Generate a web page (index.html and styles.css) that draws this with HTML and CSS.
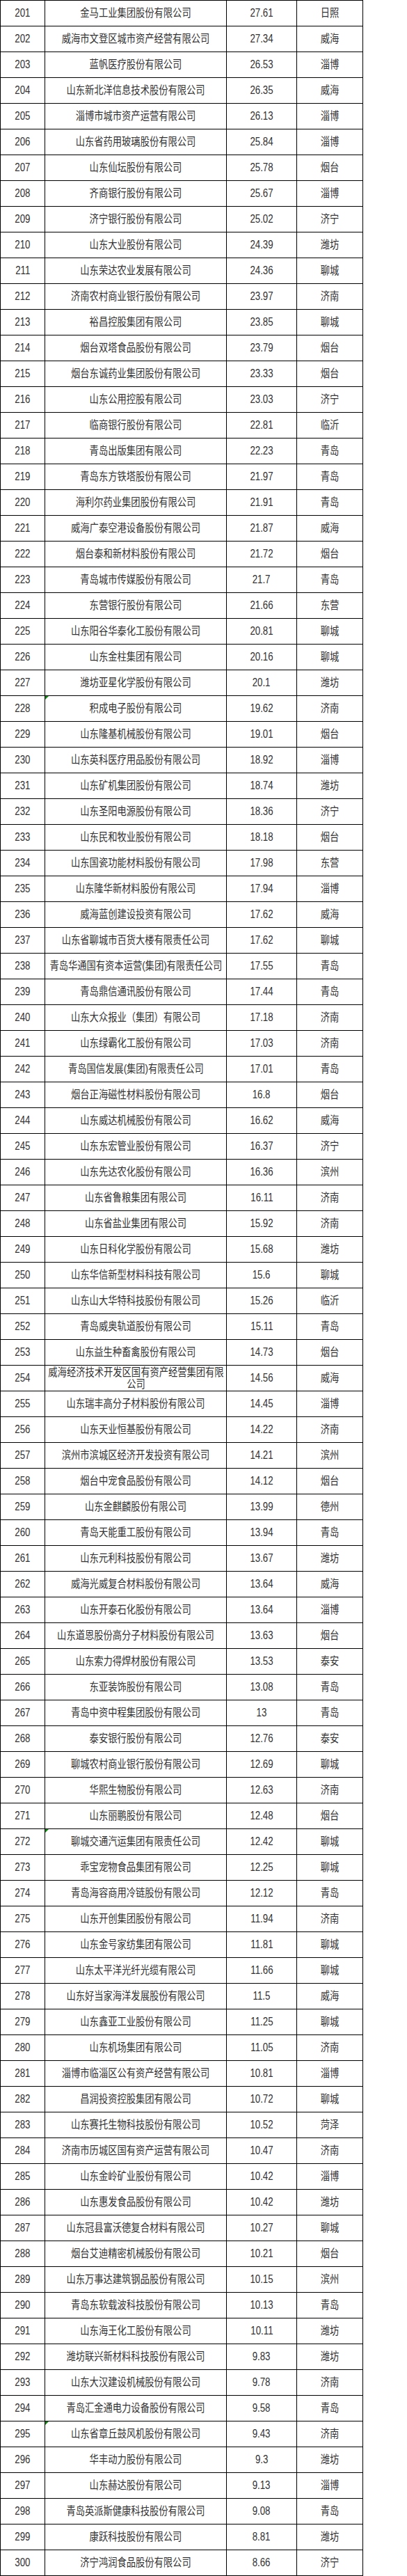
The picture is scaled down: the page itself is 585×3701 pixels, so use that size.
FILE: index.html
```html
<!DOCTYPE html>
<html lang="zh-CN">
<head>
<meta charset="utf-8">
<title>排名 201-300</title>
<link rel="stylesheet" href="styles.css">
</head>
<body>
<div class="sheet">
<div class="row"><div class="c"><span class="t">201</span></div><div class="c"><span class="t">金马工业集团股份有限公司</span></div><div class="c"><span class="t">27.61</span></div><div class="c"><span class="t">日照</span></div></div>
<div class="row"><div class="c"><span class="t">202</span></div><div class="c"><span class="t">威海市文登区城市资产经营有限公司</span></div><div class="c"><span class="t">27.34</span></div><div class="c"><span class="t">威海</span></div></div>
<div class="row"><div class="c"><span class="t">203</span></div><div class="c"><span class="t">蓝帆医疗股份有限公司</span></div><div class="c"><span class="t">26.53</span></div><div class="c"><span class="t">淄博</span></div></div>
<div class="row"><div class="c"><span class="t">204</span></div><div class="c"><span class="t">山东新北洋信息技术股份有限公司</span></div><div class="c"><span class="t">26.35</span></div><div class="c"><span class="t">威海</span></div></div>
<div class="row"><div class="c"><span class="t">205</span></div><div class="c"><span class="t">淄博市城市资产运营有限公司</span></div><div class="c"><span class="t">26.13</span></div><div class="c"><span class="t">淄博</span></div></div>
<div class="row"><div class="c"><span class="t">206</span></div><div class="c"><span class="t">山东省药用玻璃股份有限公司</span></div><div class="c"><span class="t">25.84</span></div><div class="c"><span class="t">淄博</span></div></div>
<div class="row"><div class="c"><span class="t">207</span></div><div class="c"><span class="t">山东仙坛股份有限公司</span></div><div class="c"><span class="t">25.78</span></div><div class="c"><span class="t">烟台</span></div></div>
<div class="row"><div class="c"><span class="t">208</span></div><div class="c"><span class="t">齐商银行股份有限公司</span></div><div class="c"><span class="t">25.67</span></div><div class="c"><span class="t">淄博</span></div></div>
<div class="row"><div class="c"><span class="t">209</span></div><div class="c"><span class="t">济宁银行股份有限公司</span></div><div class="c"><span class="t">25.02</span></div><div class="c"><span class="t">济宁</span></div></div>
<div class="row"><div class="c"><span class="t">210</span></div><div class="c"><span class="t">山东大业股份有限公司</span></div><div class="c"><span class="t">24.39</span></div><div class="c"><span class="t">潍坊</span></div></div>
<div class="row"><div class="c"><span class="t">211</span></div><div class="c"><span class="t">山东荣达农业发展有限公司</span></div><div class="c"><span class="t">24.36</span></div><div class="c"><span class="t">聊城</span></div></div>
<div class="row"><div class="c"><span class="t">212</span></div><div class="c"><span class="t">济南农村商业银行股份有限公司</span></div><div class="c"><span class="t">23.97</span></div><div class="c"><span class="t">济南</span></div></div>
<div class="row"><div class="c"><span class="t">213</span></div><div class="c"><span class="t">裕昌控股集团有限公司</span></div><div class="c"><span class="t">23.85</span></div><div class="c"><span class="t">聊城</span></div></div>
<div class="row"><div class="c"><span class="t">214</span></div><div class="c"><span class="t">烟台双塔食品股份有限公司</span></div><div class="c"><span class="t">23.79</span></div><div class="c"><span class="t">烟台</span></div></div>
<div class="row"><div class="c"><span class="t">215</span></div><div class="c"><span class="t">烟台东诚药业集团股份有限公司</span></div><div class="c"><span class="t">23.33</span></div><div class="c"><span class="t">烟台</span></div></div>
<div class="row"><div class="c"><span class="t">216</span></div><div class="c"><span class="t">山东公用控股有限公司</span></div><div class="c"><span class="t">23.03</span></div><div class="c"><span class="t">济宁</span></div></div>
<div class="row"><div class="c"><span class="t">217</span></div><div class="c"><span class="t">临商银行股份有限公司</span></div><div class="c"><span class="t">22.81</span></div><div class="c"><span class="t">临沂</span></div></div>
<div class="row"><div class="c"><span class="t">218</span></div><div class="c"><span class="t">青岛出版集团有限公司</span></div><div class="c"><span class="t">22.23</span></div><div class="c"><span class="t">青岛</span></div></div>
<div class="row"><div class="c"><span class="t">219</span></div><div class="c"><span class="t">青岛东方铁塔股份有限公司</span></div><div class="c"><span class="t">21.97</span></div><div class="c"><span class="t">青岛</span></div></div>
<div class="row"><div class="c"><span class="t">220</span></div><div class="c"><span class="t">海利尔药业集团股份有限公司</span></div><div class="c"><span class="t">21.91</span></div><div class="c"><span class="t">青岛</span></div></div>
<div class="row"><div class="c"><span class="t">221</span></div><div class="c"><span class="t">威海广泰空港设备股份有限公司</span></div><div class="c"><span class="t">21.87</span></div><div class="c"><span class="t">威海</span></div></div>
<div class="row"><div class="c"><span class="t">222</span></div><div class="c"><span class="t">烟台泰和新材料股份有限公司</span></div><div class="c"><span class="t">21.72</span></div><div class="c"><span class="t">烟台</span></div></div>
<div class="row"><div class="c"><span class="t">223</span></div><div class="c"><span class="t">青岛城市传媒股份有限公司</span></div><div class="c"><span class="t">21.7</span></div><div class="c"><span class="t">青岛</span></div></div>
<div class="row"><div class="c"><span class="t">224</span></div><div class="c"><span class="t">东营银行股份有限公司</span></div><div class="c"><span class="t">21.66</span></div><div class="c"><span class="t">东营</span></div></div>
<div class="row"><div class="c"><span class="t">225</span></div><div class="c"><span class="t">山东阳谷华泰化工股份有限公司</span></div><div class="c"><span class="t">20.81</span></div><div class="c"><span class="t">聊城</span></div></div>
<div class="row"><div class="c"><span class="t">226</span></div><div class="c"><span class="t">山东金柱集团有限公司</span></div><div class="c"><span class="t">20.16</span></div><div class="c"><span class="t">聊城</span></div></div>
<div class="row"><div class="c"><span class="t">227</span></div><div class="c"><span class="t">潍坊亚星化学股份有限公司</span></div><div class="c"><span class="t">20.1</span></div><div class="c"><span class="t">潍坊</span></div></div>
<div class="row"><div class="c"><span class="t">228</span></div><div class="c flag"><span class="t">积成电子股份有限公司</span></div><div class="c"><span class="t">19.62</span></div><div class="c"><span class="t">济南</span></div></div>
<div class="row"><div class="c"><span class="t">229</span></div><div class="c"><span class="t">山东隆基机械股份有限公司</span></div><div class="c"><span class="t">19.01</span></div><div class="c"><span class="t">烟台</span></div></div>
<div class="row"><div class="c"><span class="t">230</span></div><div class="c"><span class="t">山东英科医疗用品股份有限公司</span></div><div class="c"><span class="t">18.92</span></div><div class="c"><span class="t">淄博</span></div></div>
<div class="row"><div class="c"><span class="t">231</span></div><div class="c"><span class="t">山东矿机集团股份有限公司</span></div><div class="c"><span class="t">18.74</span></div><div class="c"><span class="t">潍坊</span></div></div>
<div class="row"><div class="c"><span class="t">232</span></div><div class="c"><span class="t">山东圣阳电源股份有限公司</span></div><div class="c"><span class="t">18.36</span></div><div class="c"><span class="t">济宁</span></div></div>
<div class="row"><div class="c"><span class="t">233</span></div><div class="c"><span class="t">山东民和牧业股份有限公司</span></div><div class="c"><span class="t">18.18</span></div><div class="c"><span class="t">烟台</span></div></div>
<div class="row"><div class="c"><span class="t">234</span></div><div class="c"><span class="t">山东国瓷功能材料股份有限公司</span></div><div class="c"><span class="t">17.98</span></div><div class="c"><span class="t">东营</span></div></div>
<div class="row"><div class="c"><span class="t">235</span></div><div class="c"><span class="t">山东隆华新材料股份有限公司</span></div><div class="c"><span class="t">17.94</span></div><div class="c"><span class="t">淄博</span></div></div>
<div class="row"><div class="c"><span class="t">236</span></div><div class="c"><span class="t">威海蓝创建设投资有限公司</span></div><div class="c"><span class="t">17.62</span></div><div class="c"><span class="t">威海</span></div></div>
<div class="row"><div class="c"><span class="t">237</span></div><div class="c"><span class="t">山东省聊城市百货大楼有限责任公司</span></div><div class="c"><span class="t">17.62</span></div><div class="c"><span class="t">聊城</span></div></div>
<div class="row"><div class="c"><span class="t">238</span></div><div class="c"><span class="t">青岛华通国有资本运营(集团)有限责任公司</span></div><div class="c"><span class="t">17.55</span></div><div class="c"><span class="t">青岛</span></div></div>
<div class="row"><div class="c"><span class="t">239</span></div><div class="c"><span class="t">青岛鼎信通讯股份有限公司</span></div><div class="c"><span class="t">17.44</span></div><div class="c"><span class="t">青岛</span></div></div>
<div class="row"><div class="c"><span class="t">240</span></div><div class="c"><span class="t">山东大众报业（集团）有限公司</span></div><div class="c"><span class="t">17.18</span></div><div class="c"><span class="t">济南</span></div></div>
<div class="row"><div class="c"><span class="t">241</span></div><div class="c"><span class="t">山东绿霸化工股份有限公司</span></div><div class="c"><span class="t">17.03</span></div><div class="c"><span class="t">济南</span></div></div>
<div class="row"><div class="c"><span class="t">242</span></div><div class="c"><span class="t">青岛国信发展(集团)有限责任公司</span></div><div class="c"><span class="t">17.01</span></div><div class="c"><span class="t">青岛</span></div></div>
<div class="row"><div class="c"><span class="t">243</span></div><div class="c"><span class="t">烟台正海磁性材料股份有限公司</span></div><div class="c"><span class="t">16.8</span></div><div class="c"><span class="t">烟台</span></div></div>
<div class="row"><div class="c"><span class="t">244</span></div><div class="c"><span class="t">山东威达机械股份有限公司</span></div><div class="c"><span class="t">16.62</span></div><div class="c"><span class="t">威海</span></div></div>
<div class="row"><div class="c"><span class="t">245</span></div><div class="c"><span class="t">山东东宏管业股份有限公司</span></div><div class="c"><span class="t">16.37</span></div><div class="c"><span class="t">济宁</span></div></div>
<div class="row"><div class="c"><span class="t">246</span></div><div class="c"><span class="t">山东先达农化股份有限公司</span></div><div class="c"><span class="t">16.36</span></div><div class="c"><span class="t">滨州</span></div></div>
<div class="row"><div class="c"><span class="t">247</span></div><div class="c"><span class="t">山东省鲁粮集团有限公司</span></div><div class="c"><span class="t">16.11</span></div><div class="c"><span class="t">济南</span></div></div>
<div class="row"><div class="c"><span class="t">248</span></div><div class="c"><span class="t">山东省盐业集团有限公司</span></div><div class="c"><span class="t">15.92</span></div><div class="c"><span class="t">济南</span></div></div>
<div class="row"><div class="c"><span class="t">249</span></div><div class="c"><span class="t">山东日科化学股份有限公司</span></div><div class="c"><span class="t">15.68</span></div><div class="c"><span class="t">潍坊</span></div></div>
<div class="row"><div class="c"><span class="t">250</span></div><div class="c"><span class="t">山东华信新型材料科技有限公司</span></div><div class="c"><span class="t">15.6</span></div><div class="c"><span class="t">聊城</span></div></div>
<div class="row"><div class="c"><span class="t">251</span></div><div class="c"><span class="t">山东山大华特科技股份有限公司</span></div><div class="c"><span class="t">15.26</span></div><div class="c"><span class="t">临沂</span></div></div>
<div class="row"><div class="c"><span class="t">252</span></div><div class="c"><span class="t">青岛威奥轨道股份有限公司</span></div><div class="c"><span class="t">15.11</span></div><div class="c"><span class="t">青岛</span></div></div>
<div class="row"><div class="c"><span class="t">253</span></div><div class="c"><span class="t">山东益生种畜禽股份有限公司</span></div><div class="c"><span class="t">14.73</span></div><div class="c"><span class="t">烟台</span></div></div>
<div class="row"><div class="c"><span class="t">254</span></div><div class="c"><span class="t wrap">威海经济技术开发区国有资产经营集团有限公司</span></div><div class="c"><span class="t">14.56</span></div><div class="c"><span class="t">威海</span></div></div>
<div class="row"><div class="c"><span class="t">255</span></div><div class="c"><span class="t">山东瑞丰高分子材料股份有限公司</span></div><div class="c"><span class="t">14.45</span></div><div class="c"><span class="t">淄博</span></div></div>
<div class="row"><div class="c"><span class="t">256</span></div><div class="c"><span class="t">山东天业恒基股份有限公司</span></div><div class="c"><span class="t">14.22</span></div><div class="c"><span class="t">济南</span></div></div>
<div class="row"><div class="c"><span class="t">257</span></div><div class="c"><span class="t">滨州市滨城区经济开发投资有限公司</span></div><div class="c"><span class="t">14.21</span></div><div class="c"><span class="t">滨州</span></div></div>
<div class="row"><div class="c"><span class="t">258</span></div><div class="c"><span class="t">烟台中宠食品股份有限公司</span></div><div class="c"><span class="t">14.12</span></div><div class="c"><span class="t">烟台</span></div></div>
<div class="row"><div class="c"><span class="t">259</span></div><div class="c"><span class="t">山东金麒麟股份有限公司</span></div><div class="c"><span class="t">13.99</span></div><div class="c"><span class="t">德州</span></div></div>
<div class="row"><div class="c"><span class="t">260</span></div><div class="c"><span class="t">青岛天能重工股份有限公司</span></div><div class="c"><span class="t">13.94</span></div><div class="c"><span class="t">青岛</span></div></div>
<div class="row"><div class="c"><span class="t">261</span></div><div class="c"><span class="t">山东元利科技股份有限公司</span></div><div class="c"><span class="t">13.67</span></div><div class="c"><span class="t">潍坊</span></div></div>
<div class="row"><div class="c"><span class="t">262</span></div><div class="c"><span class="t">威海光威复合材料股份有限公司</span></div><div class="c"><span class="t">13.64</span></div><div class="c"><span class="t">威海</span></div></div>
<div class="row"><div class="c"><span class="t">263</span></div><div class="c"><span class="t">山东开泰石化股份有限公司</span></div><div class="c"><span class="t">13.64</span></div><div class="c"><span class="t">淄博</span></div></div>
<div class="row"><div class="c"><span class="t">264</span></div><div class="c"><span class="t">山东道恩股份高分子材料股份有限公司</span></div><div class="c"><span class="t">13.63</span></div><div class="c"><span class="t">烟台</span></div></div>
<div class="row"><div class="c"><span class="t">265</span></div><div class="c"><span class="t">山东索力得焊材股份有限公司</span></div><div class="c"><span class="t">13.53</span></div><div class="c"><span class="t">泰安</span></div></div>
<div class="row"><div class="c"><span class="t">266</span></div><div class="c"><span class="t">东亚装饰股份有限公司</span></div><div class="c"><span class="t">13.08</span></div><div class="c"><span class="t">青岛</span></div></div>
<div class="row"><div class="c"><span class="t">267</span></div><div class="c"><span class="t">青岛中资中程集团股份有限公司</span></div><div class="c"><span class="t">13</span></div><div class="c"><span class="t">青岛</span></div></div>
<div class="row"><div class="c"><span class="t">268</span></div><div class="c"><span class="t">泰安银行股份有限公司</span></div><div class="c"><span class="t">12.76</span></div><div class="c"><span class="t">泰安</span></div></div>
<div class="row"><div class="c"><span class="t">269</span></div><div class="c"><span class="t">聊城农村商业银行股份有限公司</span></div><div class="c"><span class="t">12.69</span></div><div class="c"><span class="t">聊城</span></div></div>
<div class="row"><div class="c"><span class="t">270</span></div><div class="c"><span class="t">华熙生物股份有限公司</span></div><div class="c"><span class="t">12.63</span></div><div class="c"><span class="t">济南</span></div></div>
<div class="row"><div class="c"><span class="t">271</span></div><div class="c"><span class="t">山东丽鹏股份有限公司</span></div><div class="c"><span class="t">12.48</span></div><div class="c"><span class="t">烟台</span></div></div>
<div class="row"><div class="c"><span class="t">272</span></div><div class="c flag"><span class="t">聊城交通汽运集团有限责任公司</span></div><div class="c"><span class="t">12.42</span></div><div class="c"><span class="t">聊城</span></div></div>
<div class="row"><div class="c"><span class="t">273</span></div><div class="c"><span class="t">乖宝宠物食品集团有限公司</span></div><div class="c"><span class="t">12.25</span></div><div class="c"><span class="t">聊城</span></div></div>
<div class="row"><div class="c"><span class="t">274</span></div><div class="c"><span class="t">青岛海容商用冷链股份有限公司</span></div><div class="c"><span class="t">12.12</span></div><div class="c"><span class="t">青岛</span></div></div>
<div class="row"><div class="c"><span class="t">275</span></div><div class="c"><span class="t">山东开创集团股份有限公司</span></div><div class="c"><span class="t">11.94</span></div><div class="c"><span class="t">济南</span></div></div>
<div class="row"><div class="c"><span class="t">276</span></div><div class="c"><span class="t">山东金号家纺集团有限公司</span></div><div class="c"><span class="t">11.81</span></div><div class="c"><span class="t">聊城</span></div></div>
<div class="row"><div class="c"><span class="t">277</span></div><div class="c"><span class="t">山东太平洋光纤光缆有限公司</span></div><div class="c"><span class="t">11.66</span></div><div class="c"><span class="t">聊城</span></div></div>
<div class="row"><div class="c"><span class="t">278</span></div><div class="c"><span class="t">山东好当家海洋发展股份有限公司</span></div><div class="c"><span class="t">11.5</span></div><div class="c"><span class="t">威海</span></div></div>
<div class="row"><div class="c"><span class="t">279</span></div><div class="c"><span class="t">山东鑫亚工业股份有限公司</span></div><div class="c"><span class="t">11.25</span></div><div class="c"><span class="t">聊城</span></div></div>
<div class="row"><div class="c"><span class="t">280</span></div><div class="c"><span class="t">山东机场集团有限公司</span></div><div class="c"><span class="t">11.05</span></div><div class="c"><span class="t">济南</span></div></div>
<div class="row"><div class="c"><span class="t">281</span></div><div class="c"><span class="t">淄博市临淄区公有资产经营有限公司</span></div><div class="c"><span class="t">10.81</span></div><div class="c"><span class="t">淄博</span></div></div>
<div class="row"><div class="c"><span class="t">282</span></div><div class="c"><span class="t">昌润投资控股集团有限公司</span></div><div class="c"><span class="t">10.72</span></div><div class="c"><span class="t">聊城</span></div></div>
<div class="row"><div class="c"><span class="t">283</span></div><div class="c"><span class="t">山东赛托生物科技股份有限公司</span></div><div class="c"><span class="t">10.52</span></div><div class="c"><span class="t">菏泽</span></div></div>
<div class="row"><div class="c"><span class="t">284</span></div><div class="c"><span class="t">济南市历城区国有资产运营有限公司</span></div><div class="c"><span class="t">10.47</span></div><div class="c"><span class="t">济南</span></div></div>
<div class="row"><div class="c"><span class="t">285</span></div><div class="c"><span class="t">山东金岭矿业股份有限公司</span></div><div class="c"><span class="t">10.42</span></div><div class="c"><span class="t">淄博</span></div></div>
<div class="row"><div class="c"><span class="t">286</span></div><div class="c"><span class="t">山东惠发食品股份有限公司</span></div><div class="c"><span class="t">10.42</span></div><div class="c"><span class="t">潍坊</span></div></div>
<div class="row"><div class="c"><span class="t">287</span></div><div class="c"><span class="t">山东冠县富沃德复合材料有限公司</span></div><div class="c"><span class="t">10.27</span></div><div class="c"><span class="t">聊城</span></div></div>
<div class="row"><div class="c"><span class="t">288</span></div><div class="c"><span class="t">烟台艾迪精密机械股份有限公司</span></div><div class="c"><span class="t">10.21</span></div><div class="c"><span class="t">烟台</span></div></div>
<div class="row"><div class="c"><span class="t">289</span></div><div class="c"><span class="t">山东万事达建筑钢品股份有限公司</span></div><div class="c"><span class="t">10.15</span></div><div class="c"><span class="t">滨州</span></div></div>
<div class="row"><div class="c"><span class="t">290</span></div><div class="c"><span class="t">青岛东软载波科技股份有限公司</span></div><div class="c"><span class="t">10.13</span></div><div class="c"><span class="t">青岛</span></div></div>
<div class="row"><div class="c"><span class="t">291</span></div><div class="c"><span class="t">山东海王化工股份有限公司</span></div><div class="c"><span class="t">10.11</span></div><div class="c"><span class="t">潍坊</span></div></div>
<div class="row"><div class="c"><span class="t">292</span></div><div class="c"><span class="t">潍坊联兴新材料科技股份有限公司</span></div><div class="c"><span class="t">9.83</span></div><div class="c"><span class="t">潍坊</span></div></div>
<div class="row"><div class="c"><span class="t">293</span></div><div class="c"><span class="t">山东大汉建设机械股份有限公司</span></div><div class="c"><span class="t">9.78</span></div><div class="c"><span class="t">济南</span></div></div>
<div class="row"><div class="c"><span class="t">294</span></div><div class="c"><span class="t">青岛汇金通电力设备股份有限公司</span></div><div class="c"><span class="t">9.58</span></div><div class="c"><span class="t">青岛</span></div></div>
<div class="row"><div class="c"><span class="t">295</span></div><div class="c flag"><span class="t">山东省章丘鼓风机股份有限公司</span></div><div class="c"><span class="t">9.43</span></div><div class="c"><span class="t">济南</span></div></div>
<div class="row"><div class="c"><span class="t">296</span></div><div class="c"><span class="t">华丰动力股份有限公司</span></div><div class="c"><span class="t">9.3</span></div><div class="c"><span class="t">潍坊</span></div></div>
<div class="row"><div class="c"><span class="t">297</span></div><div class="c"><span class="t">山东赫达股份有限公司</span></div><div class="c"><span class="t">9.13</span></div><div class="c"><span class="t">淄博</span></div></div>
<div class="row"><div class="c"><span class="t">298</span></div><div class="c"><span class="t">青岛英派斯健康科技股份有限公司</span></div><div class="c"><span class="t">9.08</span></div><div class="c"><span class="t">青岛</span></div></div>
<div class="row"><div class="c"><span class="t">299</span></div><div class="c"><span class="t">康跃科技股份有限公司</span></div><div class="c"><span class="t">8.81</span></div><div class="c"><span class="t">潍坊</span></div></div>
<div class="row"><div class="c"><span class="t">300</span></div><div class="c"><span class="t">济宁鸿润食品股份有限公司</span></div><div class="c"><span class="t">8.66</span></div><div class="c"><span class="t">济宁</span></div></div>
</div>
</body>
</html>
```

FILE: styles.css
```css
html, body {
  margin: 0;
  padding: 0;
  background: #fff;
}

body {
  font-family: "Liberation Sans", "Noto Sans CJK SC", sans-serif;
  color: #333;
}

.sheet {
  width: 522px;
  box-sizing: border-box;
  border-top: 1px solid #000;
  border-left: 1px solid #000;
}

.row {
  display: grid;
  grid-template-columns: 64px 261px 101px 95px;
  height: 37px;
}

.c {
  box-sizing: border-box;
  border-right: 1px solid #000;
  border-bottom: 1px solid #000;
  display: flex;
  align-items: center;
  justify-content: center;
  position: relative;
  min-width: 0;
}

.t {
  display: inline-block;
  flex-shrink: 0;
  white-space: nowrap;
  font-size: 16px;
  line-height: 18px;
  transform: scaleX(0.83);
}

.t.wrap {
  white-space: normal;
  width: 313px;
  text-align: center;
  line-height: 17px;
}

.flag::before {
  content: "";
  position: absolute;
  top: 0;
  left: 0;
  width: 0;
  height: 0;
  border-top: 5px solid #0a8a0a;
  border-right: 5px solid transparent;
}
```
